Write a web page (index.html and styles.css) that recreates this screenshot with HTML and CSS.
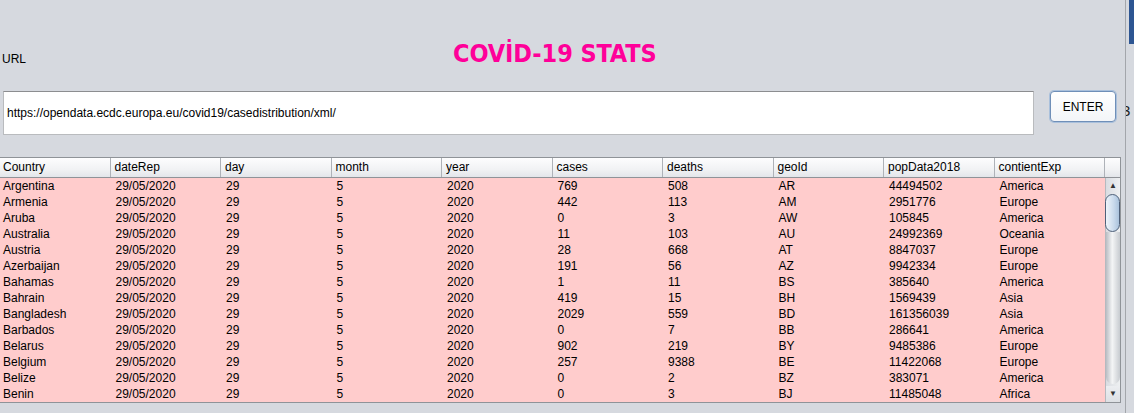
FILE: index.html
```html
<!DOCTYPE html>
<html lang="en">
<head>
    <meta charset="UTF-8">
    <title>Covid-19 Stats</title>
    <link rel="stylesheet" href="styles.css">
</head>
<body>
    <div class="app">
        <div class="title-row">
            <span class="url-label">URL</span>
            <h1 class="title">COVİD-19 STATS</h1>
        </div>
        <div class="url-row">
            <input class="url-input" type="text" value="https://opendata.ecdc.europa.eu/covid19/casedistribution/xml/">
            <button class="enter-btn">ENTER</button>
        </div>
        <div class="grid">
            <div class="thead">
                <div class="th">Country</div>
                <div class="th">dateRep</div>
                <div class="th">day</div>
                <div class="th">month</div>
                <div class="th">year</div>
                <div class="th">cases</div>
                <div class="th">deaths</div>
                <div class="th">geoId</div>
                <div class="th">popData2018</div>
                <div class="th">contientExp</div>
                <div class="th corner"></div>
            </div>
            <div class="tbody">
                <div class="rows" id="rows"></div>
                <div class="scroll">
                    <div class="arrow">&#9650;</div>
                    <div class="thumb"></div>
                    <div class="track"></div>
                    <div class="arrow down">&#9660;</div>
                </div>
            </div>
        </div>
    </div>
    <div class="edge">
        <div class="edge-top"></div>
        <span class="edge-label">3</span>
    </div>
    <script>
const data = [
    ["Argentina", 769, 508, "AR", 44494502, "America"],
    ["Armenia", 442, 113, "AM", 2951776, "Europe"],
    ["Aruba", 0, 3, "AW", 105845, "America"],
    ["Australia", 11, 103, "AU", 24992369, "Oceania"],
    ["Austria", 28, 668, "AT", 8847037, "Europe"],
    ["Azerbaijan", 191, 56, "AZ", 9942334, "Europe"],
    ["Bahamas", 1, 11, "BS", 385640, "America"],
    ["Bahrain", 419, 15, "BH", 1569439, "Asia"],
    ["Bangladesh", 2029, 559, "BD", 161356039, "Asia"],
    ["Barbados", 0, 7, "BB", 286641, "America"],
    ["Belarus", 902, 219, "BY", 9485386, "Europe"],
    ["Belgium", 257, 9388, "BE", 11422068, "Europe"],
    ["Belize", 0, 2, "BZ", 383071, "America"],
    ["Benin", 0, 3, "BJ", 11485048, "Africa"]
];

const rowsBox = document.querySelector("#rows");

data.forEach((d) => {
    const cells = [d[0], "29/05/2020", 29, 5, 2020, d[1], d[2], d[3], d[4], d[5]];
    const row = document.createElement("div");
    row.className = "row";
    cells.forEach((c) => {
        const td = document.createElement("div");
        td.className = "td";
        td.innerText = c;
        row.appendChild(td);
    });
    rowsBox.appendChild(row);
});
    </script>
</body>
</html>
```

FILE: styles.css
```css
*{
    margin: 0;
    padding: 0;
    box-sizing: border-box;
}
body{
    display: flex;
    width: 1134px;
    height: 413px;
    overflow: hidden;
    background-color: #d6d9df;
    font-family: "Liberation Sans", Arial, sans-serif;
    font-size: 12px;
    color: #000;
}
.app{
    width: 1125px;
    flex-shrink: 0;
}
.title-row{
    display: flex;
    align-items: baseline;
    padding-top: 39px;
}
.url-label{
    width: 453px;
    padding-left: 2px;
    font-size: 12px;
    position: relative;
    top: 1px;
}
.title{
    font-family: "DejaVu Sans Condensed", "DejaVu Sans", sans-serif;
    font-size: 25px;
    line-height: 30px;
    font-weight: bold;
    letter-spacing: -0.1px;
    color: #ff0099;
}
.url-row{
    display: flex;
    align-items: flex-start;
    gap: 16px;
    margin-top: 22px;
    padding-left: 3px;
}
.url-input{
    width: 1031px;
    height: 44px;
    padding: 0 3px;
    border: 1px solid #b9bbbe;
    border-top-color: #8c8d90;
    background: #fff;
    font-family: "Liberation Sans", Arial, sans-serif;
    font-size: 12px;
    color: #000;
    outline: none;
}
.enter-btn{
    width: 66px;
    height: 31px;
    border: 1px solid #6f8fb8;
    border-radius: 4px;
    box-shadow: 0 0 0 1px #a9c0dc;
    background: linear-gradient(#ffffff, #f3f5f8);
    font-family: "Liberation Sans", Arial, sans-serif;
    font-size: 12px;
    color: #000;
}
.grid{
    width: 1121px;
    margin-top: 22px;
    border: 1px solid #8f9398;
    border-left: none;
}
.thead{
    display: grid;
    grid-template-columns: repeat(10, 110.5px) 1fr;
    height: 20px;
    border-bottom: 1px solid #8f9398;
}
.th{
    padding-left: 4px;
    line-height: 19px;
    border-right: 1px solid #aeb2b8;
    background: linear-gradient(#fdfdfe, #f1f2f4 60%, #e3e6ea);
    white-space: nowrap;
}
.th:first-child{
    padding-left: 3px;
}
.th.corner{
    border-right: none;
}
.tbody{
    display: flex;
    height: 224px;
}
.rows{
    width: 1105px;
    background-color: #ffcccc;
}
.row{
    display: grid;
    grid-template-columns: repeat(10, 110.5px);
    height: 16px;
    line-height: 16px;
}
.td{
    padding-left: 5px;
    white-space: nowrap;
}
.td:first-child{
    padding-left: 3px;
}
.scroll{
    flex: 1;
    display: flex;
    flex-direction: column;
    border-left: 1px solid #b5b9bf;
    background: linear-gradient(to right, #d9dce1, #eef0f2);
}
.arrow{
    height: 16px;
    text-align: center;
    font-size: 8px;
    line-height: 16px;
    color: #333;
}
.thumb{
    height: 38px;
    margin: 0 0 0 -1px;
    border: 1px solid #4e6079;
    border-radius: 9px;
    background: linear-gradient(to right, #eef4fa, #c9daec 60%, #aac2dc);
}
.track{
    flex: 1;
    border-radius: 0 0 9px 9px;
    background: linear-gradient(to right, #b9bdc3, #f4f5f6 45%, #c7cbd0);
    margin-bottom: 2px;
}
.arrow.down{
    background: linear-gradient(#eceef1, #dde0e4);
}
.edge{
    position: relative;
    flex: 1;
    overflow: hidden;
    border-left: 1px solid #a3a6ab;
}
.edge-top{
    height: 44px;
    margin-left: 3px;
    background-color: #2d5592;
}
.edge-label{
    position: absolute;
    left: -4px;
    top: 102px;
    font-size: 15px;
    color: #222;
}
```
